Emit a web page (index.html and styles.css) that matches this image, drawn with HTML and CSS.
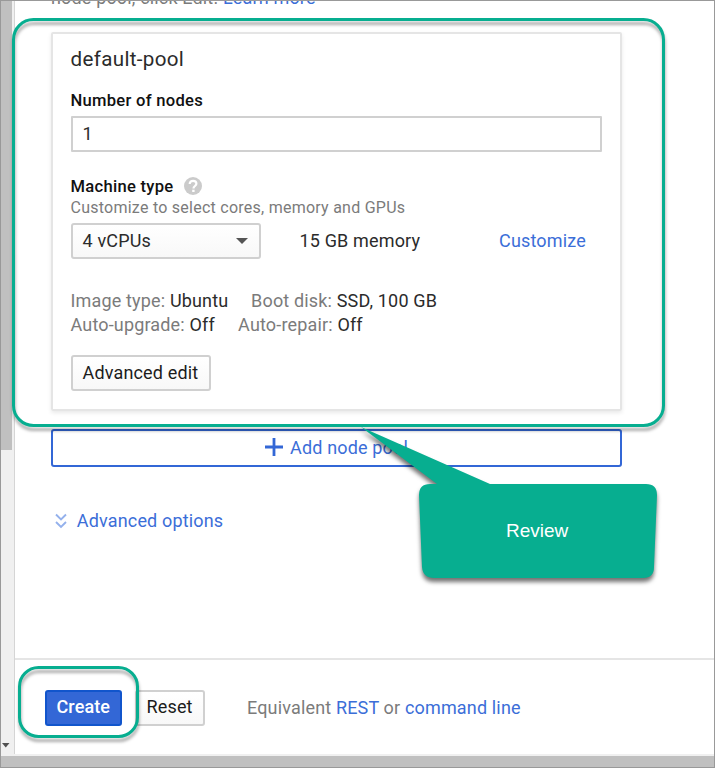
FILE: index.html
```html
<!DOCTYPE html>
<html lang="en">
<head>
<meta charset="utf-8">
<title>Create cluster</title>
<link rel="stylesheet" href="styles.css">
</head>
<body>
<div class="window">
  <div class="body-row">
    <div class="scrollbar">
      <div class="thumb"></div>
      <svg class="scroll-arrow" width="8" height="5" viewBox="0 0 8 5"><path d="M0 0h7.5L3.75 4.4z" fill="#505050"/></svg>
    </div>
    <main class="main">
      <div class="content">
        <p class="intro">node pool, click Edit. <a>Learn more</a></p>
        <section class="card">
          <h2 class="pool-name">default-pool</h2>
          <div class="label nodes-label">Number of nodes</div>
          <div class="input">1</div>
          <div class="label machine-label">Machine type
            <svg class="help" width="18" height="18" viewBox="0 0 18 18"><circle cx="9" cy="9" r="9" fill="#cbcbcb"/><path d="M5.7 7.1C5.7 5 7.1 3.8 9.1 3.8s3.3 1.1 3.3 3c0 2.1-2.9 2.3-2.9 4.6" fill="none" stroke="#fff" stroke-width="2.2"/><rect x="8.2" y="12.7" width="2.4" height="2.3" fill="#fff"/></svg>
          </div>
          <div class="hint">Customize to select cores, memory and GPUs</div>
          <div class="machine-row">
            <div class="select">4 vCPUs<svg width="12" height="6" viewBox="0 0 12 6"><path d="M0 0h12L6 6z" fill="#555"/></svg></div>
            <span class="memory">15 GB memory</span>
            <a>Customize</a>
          </div>
          <div class="facts">
            <div><span class="fact f1">Image type: <b>Ubuntu</b></span><span>Boot disk: <b>SSD, 100 GB</b></span></div>
            <div><span class="fact f2">Auto-upgrade: <b>Off</b></span><span>Auto-repair: <b>Off</b></span></div>
          </div>
          <div class="button advanced-edit">Advanced edit</div>
        </section>
        <div class="add-pool">
          <svg width="18" height="18" viewBox="0 0 18 18"><path d="M9 0v18M0 9h18" stroke="#3367d6" stroke-width="2.8"/></svg>
          <span>Add node pool</span>
        </div>
        <a class="options">
          <svg width="12" height="16" viewBox="0 0 12 16"><path d="M1 1.5l5 5 5-5M1 9l5 5 5-5" fill="none" stroke="#94b1ec" stroke-width="1.9"/></svg>
          <span>Advanced options</span>
        </a>
      </div>
      <footer class="footer">
        <div class="button create">Create</div>
        <div class="button reset">Reset</div>
        <div class="equiv">Equivalent <a>REST</a> or <a>command line</a></div>
      </footer>
    </main>
  </div>
  <div class="hbar"></div>
</div>
<svg class="annotations" width="715" height="768" viewBox="0 0 715 768">
  <defs>
    <filter id="ring-shadow" x="-10%" y="-10%" width="120%" height="130%" color-interpolation-filters="sRGB"><feDropShadow dx="0.5" dy="4" stdDeviation="1.5" flood-color="#000" flood-opacity=".32"/></filter>
    <filter id="callout-shadow" x="-10%" y="-10%" width="120%" height="130%" color-interpolation-filters="sRGB"><feDropShadow dx="0" dy="4" stdDeviation="2" flood-color="#000" flood-opacity=".55"/></filter>
  </defs>
  <g fill="none" stroke="#07ae90" stroke-width="3" filter="url(#ring-shadow)">
    <rect x="13.5" y="19.5" width="650" height="406" rx="20"/>
    <rect x="19.5" y="667.5" width="118" height="69" rx="19"/>
  </g>
  <path d="M361 427L490 484H646Q657 484 657 495L654 567Q654 578 643 578H434Q423 578 422 567L419 495Q419 484 430 484H437Z" fill="#07ae90" filter="url(#callout-shadow)"/>
</svg>
<div class="callout-text">Review</div>
</body>
</html>
```
FILE: styles.css
```css
* { box-sizing: border-box; }
body { margin: 0; font-family: Roboto, "Liberation Sans", sans-serif; font-size: 18px; letter-spacing: .16px; color: #2b2b2b; }
a { color: #3b6ed8; }
.window { width: 715px; height: 768px; border: 1px solid #999; background: #fff; display: flex; flex-direction: column; overflow: hidden; }
.body-row { flex: 1; display: flex; min-height: 0; }
.hbar { height: 13px; flex: none; background: #c0c0c0; border-top: 2px solid #f0f0f0; }
.scrollbar { width: 14px; flex: none; background: #f0f0f0; border-right: 1px solid #d5d5d5; display: flex; flex-direction: column; justify-content: space-between; }
.thumb { width: 11px; height: 449px; background: #c0c0c0; }
.scroll-arrow { margin: 0 0 6px 1px; }
.main { flex: 1; display: flex; flex-direction: column; min-width: 0; }
.content { flex: 1; min-height: 0; padding-left: 36px; overflow: hidden; }
.intro { margin: -13px 0 0; height: 44px; line-height: 20px; color: #7b7b7b; white-space: pre; }
.card { width: 571px; height: 379px; border: 2px solid #e5e5e5; border-radius: 2px; padding: 11px 18px 0 17.5px; box-shadow: 0 2px 4px rgba(0,0,0,.09); }
.pool-name { margin: 0; font-size: 20.6px; font-weight: 400; line-height: 28px; letter-spacing: .33px; }
.label { font-size: 16.6px; font-weight: 500; color: #111; line-height: 20px; letter-spacing: .27px; display: flex; align-items: center; }
.nodes-label { margin-top: 18px; }
.input { margin-top: 5px; height: 36px; width: 531px; border: 2px solid #d0d0d0; border-radius: 1px; padding-left: 10px; line-height: 32px; }
.machine-label { margin-top: 25px; }
.help { margin: -2px 0 0 10.6px; }
.hint { font-size: 16px; line-height: 20px; margin-top: 1px; color: #7b7b7b; letter-spacing: .25px; }
.machine-row { display: flex; align-items: center; margin-top: 5px; height: 36px; line-height: 32px; }
.select { width: 190px; height: 36px; border: 2px solid #d0d0d0; border-radius: 3px; background: linear-gradient(#fff, #f8f8f8); display: flex; align-items: center; justify-content: space-between; padding: 0 11px 0 10px; }
.memory { width: 199.5px; margin-left: 39px; }
.facts { margin-top: 30px; line-height: 24px; color: #7b7b7b; }
.facts b { font-weight: 400; color: #2b2b2b; }
.fact { display: inline-block; }
.f1 { width: 180.6px; }
.f2 { width: 167.6px; }
.button { height: 36px; border: 2px solid #d0d0d0; border-radius: 3px; background: linear-gradient(#fff, #f8f8f8); line-height: 32px; padding-left: 9.5px; color: #1c1c1c; }
.advanced-edit { width: 140px; margin-top: 18px; padding-left: 10px; }
.add-pool { width: 571px; height: 38px; margin-top: 18px; border: 2px solid #3367d6; border-radius: 3px; color: #3b6ed8; line-height: 34px; display: flex; align-items: flex-start; padding-left: 212px; }
.add-pool svg { margin: 7px 7px 0 0; }
.options { display: flex; align-items: center; margin: 43px 0 0 4px; line-height: 22px; }
.options svg { margin: -1px 9.8px 0 0; }
.footer { height: 96px; flex: none; border-top: 2px solid #e5e5e5; display: flex; padding: 30px 0 0 30px; }
.create { width: 77px; background: #3367d6; border-color: #1155cc; color: #fff; font-weight: 500; line-height: 30px; letter-spacing: .1px; }
.reset { width: 70px; margin-left: 13px; line-height: 30px; }
.equiv { margin-left: 42px; line-height: 36px; color: #7b7b7b; }
.annotations { position: absolute; left: 0; top: 0; pointer-events: none; }
.callout-text { position: absolute; left: 420px; top: 484px; width: 236px; padding-left: 86px; color: #fff; font: 19px/94px "Liberation Sans", sans-serif; letter-spacing: 0; }
```
